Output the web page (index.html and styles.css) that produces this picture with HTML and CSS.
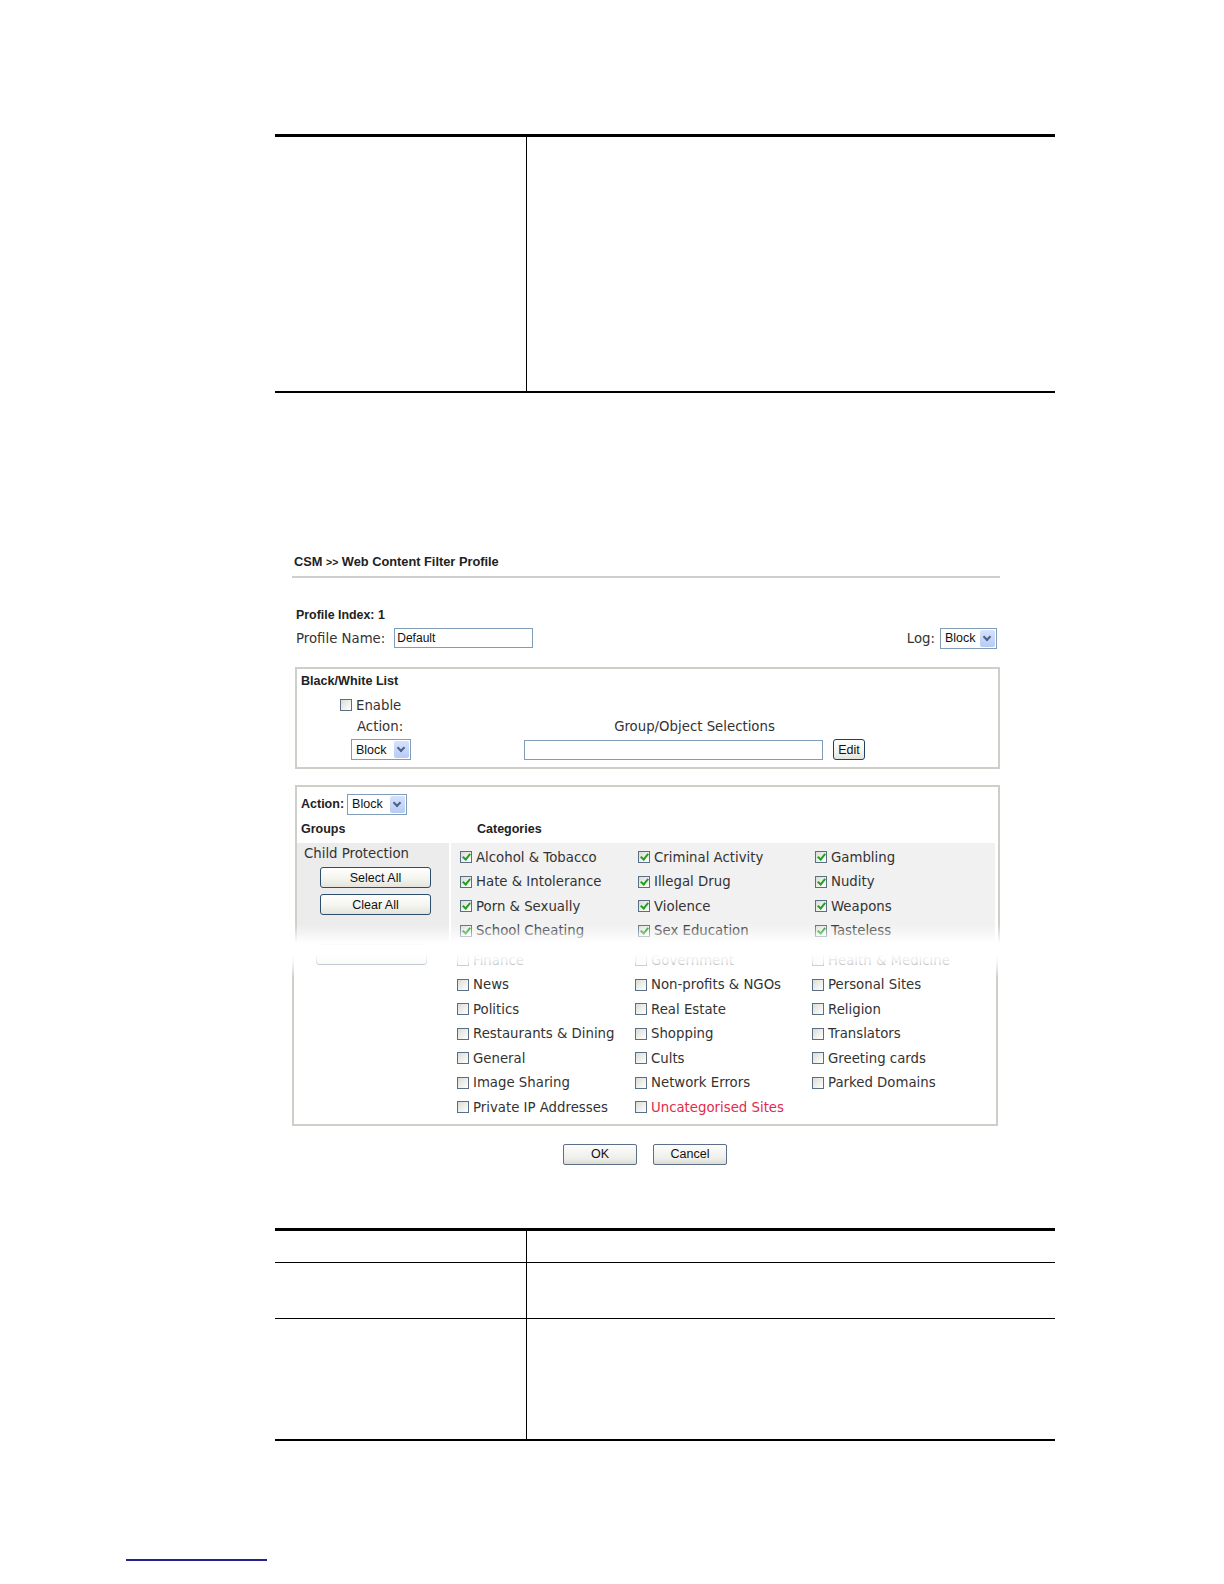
FILE: index.html
```html
<!DOCTYPE html>
<html>
<head>
<meta charset="utf-8">
<title>CSM Web Content Filter Profile</title>
<link rel="stylesheet" href="styles.css">
</head>
<body>
<div class="page">
  <div class="doc-table top-table">
    <div class="cell c-left"></div>
    <div class="cell c-right"></div>
  </div>

  <div class="shot">
    <div class="title">CSM <span class="arrows">&gt;&gt;</span> Web Content Filter Profile</div>
    <div class="title-rule"></div>
    <div class="pindex">Profile Index: 1</div>
    <div class="pname-row">
      <span class="lbl">Profile Name:</span>
      <span class="text-input name-input">Default</span>
      <span class="spacer"></span>
      <span class="lbl log-lbl">Log:</span>
      <span class="select log-select"><span class="sel-text">Block</span><span class="sel-btn"></span></span>
    </div>

    <div class="bw-box">
      <div class="box-title">Black/White List</div>
      <div class="enable-row"><span class="cb"></span><span class="lbl">Enable</span></div>
      <div class="bw-labels"><span class="lbl bw-action">Action:</span><span class="lbl bw-group">Group/Object Selections</span></div>
      <div class="bw-controls">
        <span class="select bw-select"><span class="sel-text">Block</span><span class="sel-btn"></span></span>
        <span class="text-input group-input"></span>
        <span class="btn edit-btn">Edit</span>
      </div>
    </div>

    <div class="cat-upper">
      <div class="cat-action"><span class="blbl">Action:</span><span class="select cat-select"><span class="sel-text">Block</span><span class="sel-btn"></span></span></div>
      <div class="cat-heads"><span class="blbl h-groups">Groups</span><span class="blbl">Categories</span></div>
      <div class="band">
        <div class="group-cell">
          <div class="group-name">Child Protection</div>
          <span class="btn gbtn">Select All</span>
          <span class="btn gbtn gbtn2">Clear All</span>
        </div>
        <div class="cat-grid">
          <div class="cat"><span class="cb on"></span><span>Alcohol &amp; Tobacco</span></div>
          <div class="cat"><span class="cb on"></span><span>Criminal Activity</span></div>
          <div class="cat"><span class="cb on"></span><span>Gambling</span></div>
          <div class="cat"><span class="cb on"></span><span>Hate &amp; Intolerance</span></div>
          <div class="cat"><span class="cb on"></span><span>Illegal Drug</span></div>
          <div class="cat"><span class="cb on"></span><span>Nudity</span></div>
          <div class="cat"><span class="cb on"></span><span>Porn &amp; Sexually</span></div>
          <div class="cat"><span class="cb on"></span><span>Violence</span></div>
          <div class="cat"><span class="cb on"></span><span>Weapons</span></div>
          <div class="cat"><span class="cb on"></span><span>School Cheating</span></div>
          <div class="cat"><span class="cb on"></span><span>Sex Education</span></div>
          <div class="cat"><span class="cb on"></span><span>Tasteless</span></div>
        </div>
      </div>
    </div>

    <div class="cat-lower">
      <div class="group-cell low"><span class="btn gbtn stub"></span></div>
      <div class="cat-grid">
        <div class="cat"><span class="cb"></span><span>Finance</span></div>
        <div class="cat"><span class="cb"></span><span>Government</span></div>
        <div class="cat"><span class="cb"></span><span>Health &amp; Medicine</span></div>
        <div class="cat"><span class="cb"></span><span>News</span></div>
        <div class="cat"><span class="cb"></span><span>Non-profits &amp; NGOs</span></div>
        <div class="cat"><span class="cb"></span><span>Personal Sites</span></div>
        <div class="cat"><span class="cb"></span><span>Politics</span></div>
        <div class="cat"><span class="cb"></span><span>Real Estate</span></div>
        <div class="cat"><span class="cb"></span><span>Religion</span></div>
        <div class="cat"><span class="cb"></span><span>Restaurants &amp; Dining</span></div>
        <div class="cat"><span class="cb"></span><span>Shopping</span></div>
        <div class="cat"><span class="cb"></span><span>Translators</span></div>
        <div class="cat"><span class="cb"></span><span>General</span></div>
        <div class="cat"><span class="cb"></span><span>Cults</span></div>
        <div class="cat"><span class="cb"></span><span>Greeting cards</span></div>
        <div class="cat"><span class="cb"></span><span>Image Sharing</span></div>
        <div class="cat"><span class="cb"></span><span>Network Errors</span></div>
        <div class="cat"><span class="cb"></span><span>Parked Domains</span></div>
        <div class="cat"><span class="cb"></span><span>Private IP Addresses</span></div>
        <div class="cat"><span class="cb"></span><span class="red">Uncategorised Sites</span></div>
      </div>
    </div>

    <div class="fade"></div>

    <div class="actions">
      <span class="btn act">OK</span>
      <span class="btn act">Cancel</span>
    </div>
  </div>

  <div class="doc-table bottom-table">
    <div class="cell c-left r1"></div><div class="cell c-right r1"></div>
    <div class="cell c-left r2"></div><div class="cell c-right r2"></div>
    <div class="cell c-left r3"></div><div class="cell c-right r3"></div>
  </div>

  <div class="foot-line"></div>
</div>
</body>
</html>
```

FILE: styles.css
```css
html, body {
  margin: 0;
  padding: 0;
  background: #ffffff;
}

.page {
  display: flow-root;
  width: 1224px;
  height: 1584px;
  overflow: hidden;
  font-family: "Liberation Sans", Arial, sans-serif;
  color: #222;
}

/* document tables */
.doc-table {
  margin-left: 275px;
  width: 780px;
  display: grid;
  grid-template-columns: 252px 1fr;
  border-top: 3px solid #000;
  border-bottom: 2px solid #000;
  box-sizing: border-box;
}

.top-table {
  margin-top: 134px;
  grid-template-rows: 254px;
}

.cell.c-left {
  border-right: 1px solid #000;
}

.bottom-table {
  margin-top: 20px;
  grid-template-rows: 32px 56px 120px;
}

.bottom-table .r1,
.bottom-table .r2 {
  border-bottom: 1px solid #000;
}

/* screenshot */
.shot {
  position: relative;
  margin-top: 159px;
  margin-left: 290px;
  width: 710px;
  height: 656px;
}

.title {
  height: 18px;
  line-height: 19px;
  padding-left: 4px;
  font-size: 12.8px;
  font-weight: bold;
  color: #222;
}

.title .arrows {
  font-size: 10.5px;
}

.title-rule {
  margin-top: 6px;
  margin-left: 2px;
  height: 2px;
  background: #cfcfcf;
}

.pindex {
  margin-top: 29px;
  height: 16px;
  line-height: 16px;
  padding-left: 6px;
  font-size: 12.4px;
  font-weight: bold;
}

.lbl {
  font-family: "DejaVu Sans", Verdana, sans-serif;
  font-size: 13.3px;
  color: #333;
  white-space: nowrap;
}

.blbl {
  font-size: 12.5px;
  font-weight: bold;
  color: #222;
  white-space: nowrap;
}

.pname-row {
  margin-top: 4px;
  height: 22px;
  display: flex;
  align-items: center;
  padding-left: 6px;
  padding-right: 3px;
}

.text-input {
  display: inline-block;
  box-sizing: border-box;
  height: 20px;
  border: 1px solid #7f9db9;
  background: #fff;
  font-size: 12px;
  line-height: 18px;
  padding-left: 2px;
  color: #111;
}

.name-input {
  margin-left: 9px;
  width: 139px;
}

.spacer {
  flex: 1;
}

.log-lbl {
  margin-right: 5px;
}

/* select */
.select {
  display: inline-flex;
  box-sizing: border-box;
  height: 21px;
  border: 1px solid #7f9db9;
  background: #fff;
  align-items: center;
}

.sel-text {
  flex: 1;
  padding-left: 4px;
  font-size: 12.5px;
  color: #111;
}

.sel-btn {
  position: relative;
  width: 15px;
  height: 17px;
  margin-right: 1px;
  border-radius: 2px;
  background: linear-gradient(#d6e2fc, #b6cbf6);
}

.sel-btn::after {
  content: "";
  position: absolute;
  left: 4px;
  top: 4px;
  width: 4px;
  height: 4px;
  border-right: 2px solid #4d6185;
  border-bottom: 2px solid #4d6185;
  transform: rotate(45deg);
}

.log-select {
  width: 57px;
}

/* checkbox */
.cb {
  position: relative;
  display: inline-block;
  box-sizing: border-box;
  width: 12px;
  height: 12px;
  border: 1px solid #5a6f84;
  background: linear-gradient(135deg, #dcdcd6, #ffffff);
  flex: none;
}

.cb.on::after {
  content: "";
  position: absolute;
  left: 3px;
  top: 0px;
  width: 3px;
  height: 6px;
  border-right: 2px solid #21a121;
  border-bottom: 2px solid #21a121;
  transform: rotate(40deg);
}

/* black/white box */
.bw-box {
  margin-top: 18px;
  margin-left: 5px;
  width: 705px;
  box-sizing: border-box;
  border: 2px solid #cfcfc9;
  padding-top: 4px;
  padding-bottom: 7px;
}

.box-title {
  height: 16px;
  line-height: 16px;
  padding-left: 4px;
  font-size: 12.6px;
  font-weight: bold;
}

.enable-row {
  margin-top: 8px;
  height: 16px;
  display: flex;
  align-items: center;
  padding-left: 43px;
}

.enable-row .cb {
  margin-right: 4px;
}

.bw-labels {
  margin-top: 6px;
  height: 16px;
  line-height: 16px;
  display: flex;
}

.bw-action {
  width: 167px;
  padding-left: 60px;
}

.bw-group {
  width: 341px;
  text-align: center;
}

.bw-controls {
  margin-top: 4px;
  height: 21px;
  display: flex;
  align-items: center;
  padding-left: 54px;
}

.bw-select {
  width: 60px;
}

.group-input {
  margin-left: 113px;
  width: 299px;
}

/* buttons */
.btn {
  display: inline-flex;
  align-items: center;
  justify-content: center;
  box-sizing: border-box;
  height: 21px;
  border: 1px solid #2b4d6e;
  border-radius: 3px;
  background: linear-gradient(#ffffff, #f3f3ee 60%, #e4e4dc);
  font-size: 12.5px;
  color: #111;
}

.edit-btn {
  margin-left: 10px;
  width: 32px;
  border-color: #1f3f66;
}

/* category box */
.cat-upper {
  margin-top: 16px;
  margin-left: 5px;
  width: 705px;
  box-sizing: border-box;
  border: 2px solid #cfcfc9;
  border-bottom: none;
  padding-top: 7px;
}

.cat-action {
  height: 20px;
  display: flex;
  align-items: center;
  padding-left: 4px;
}

.cat-select {
  margin-left: 3px;
  width: 60px;
}

.cat-heads {
  margin-top: 7px;
  height: 16px;
  line-height: 16px;
  padding-left: 4px;
  display: flex;
}

.h-groups {
  width: 176px;
}

.band {
  margin-top: 6px;
  margin-right: 3px;
  height: 104px;
  display: flex;
}

.group-cell {
  width: 152px;
  flex: none;
  background: #ececec;
  display: flex;
  flex-direction: column;
}

.group-name {
  padding-top: 3px;
  padding-left: 7px;
  height: 16px;
  line-height: 16px;
  font-family: "DejaVu Sans", Verdana, sans-serif;
  font-size: 13.3px;
  color: #333;
}

.gbtn {
  margin-left: 23px;
  margin-top: 5px;
  width: 111px;
}

.gbtn2 {
  margin-top: 6px;
}

.cat-grid {
  flex: 1;
  margin-left: 2px;
  padding-left: 9px;
  padding-top: 2px;
  display: grid;
  grid-template-columns: 178px 177px 1fr;
  grid-auto-rows: 24.5px;
  align-content: start;
}

.band .cat-grid {
  background: #f1f1f1;
}

.cat {
  display: flex;
  align-items: center;
  font-family: "DejaVu Sans", Verdana, sans-serif;
  font-size: 13.3px;
  color: #333;
  white-space: nowrap;
}

.cat .cb {
  margin-right: 4px;
}

.red {
  color: #e42a4c;
}

.cat-lower {
  margin-left: 2px;
  width: 706px;
  box-sizing: border-box;
  border: 2px solid #cfcfc9;
  border-top: none;
  padding-bottom: 4px;
  display: flex;
}

.group-cell.low {
  background: transparent;
}

.stub {
  margin-top: -3px;
  margin-left: 22px;
}

.cat-lower .cat-grid {
  padding-top: 1px;
}

.fade {
  position: absolute;
  left: -10px;
  right: -10px;
  top: 372px;
  height: 54px;
  background: linear-gradient(
    rgba(255,255,255,0) 0px,
    rgba(255,255,255,0.35) 8px,
    rgba(255,255,255,0.95) 18px,
    #ffffff 22px,
    #ffffff 30px,
    rgba(255,255,255,0.85) 38px,
    rgba(255,255,255,0) 54px
  );
}

.actions {
  margin-top: 18px;
  display: flex;
  justify-content: center;
  gap: 16px;
}

.act {
  width: 74px;
  border-color: #5b7088;
  border-radius: 2px;
  background: linear-gradient(#fdfdfd, #eeeeea 70%, #dcdcd6);
}

.foot-line {
  margin-top: 118px;
  margin-left: 126px;
  width: 141px;
  height: 2px;
  background: #23238f;
}
```
